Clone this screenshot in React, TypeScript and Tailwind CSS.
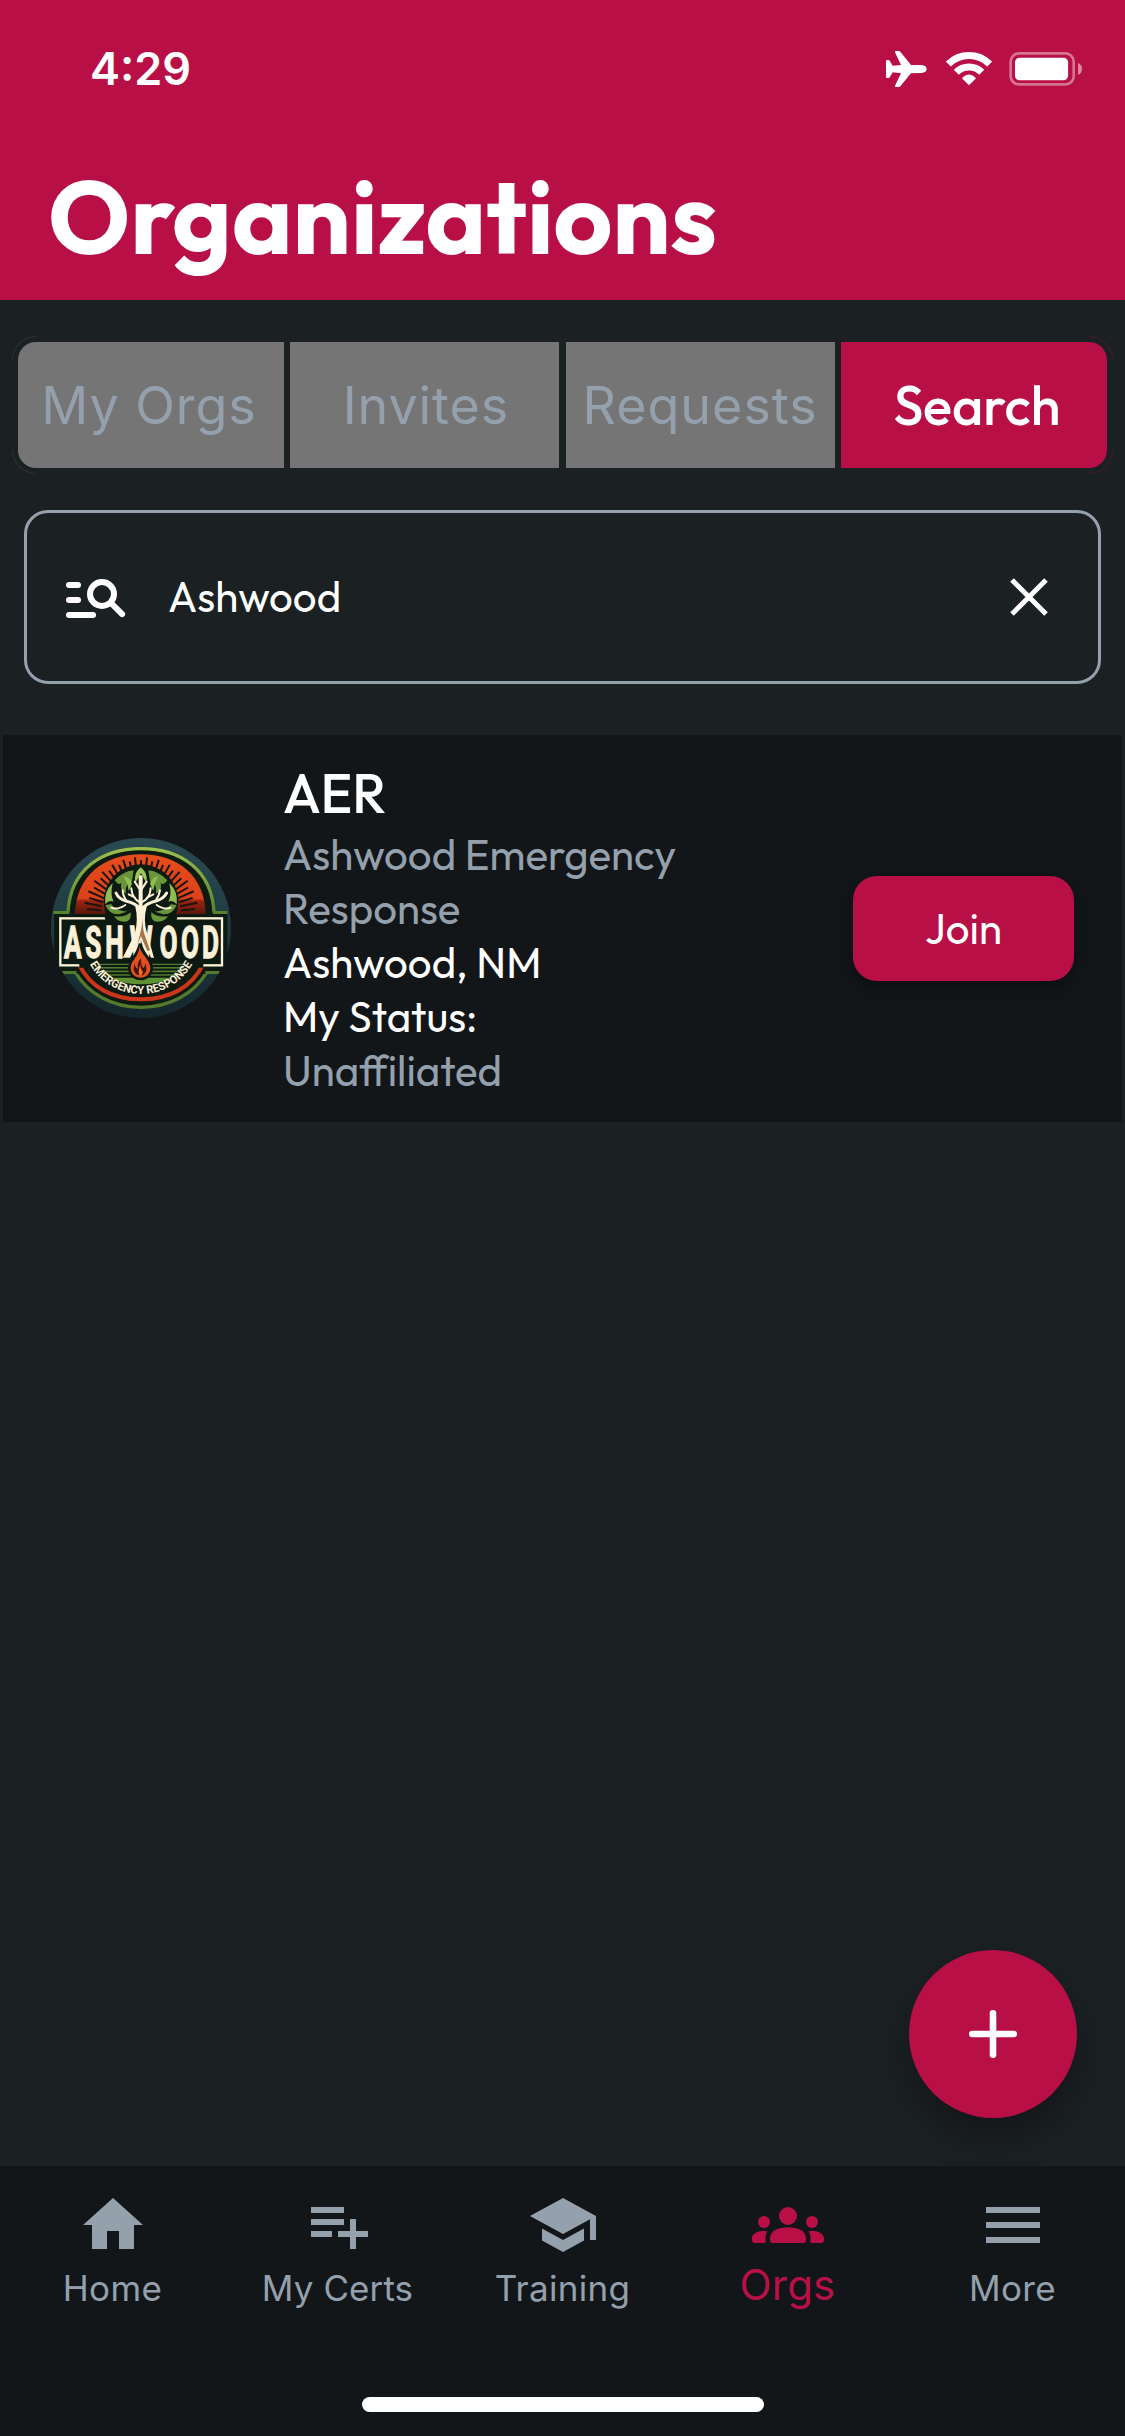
import type { ReactNode } from "react";

function StatusIcons() {
  return (
    <div className="flex items-center text-white">
      <svg viewBox="78 60 123 114" className="h-[38px] w-[41px]" fill="currentColor">
        <path d="M153 105 L121 65 Q119 63 116 63 L108 63 Q103 63 105 67 L123 105 L98 107 L89 92 Q88 90 85 90 L81 90 Q78 90 78 93 L78 141 Q78 144 81 144 L85 144 Q88 144 89 142 L98 127 L123 130 L105 167 Q103 171 108 171 L116 171 Q119 171 121 169 L153 130 L184 129 Q200 127 200 117 Q200 107 184 105 Z" />
      </svg>
      <svg viewBox="257 60 139 114" className="ml-[19px] h-[38px] w-[46px]" fill="none" stroke="currentColor" strokeWidth="21">
        <path d="M264 102 A88.5 88.5 0 0 1 389 102" />
        <path d="M288 127 A54 54 0 0 1 365 127" />
        <path d="M326.500 163 L308 145 Q326.500 127 345 145 Z" fill="currentColor" strokeWidth="4" strokeLinejoin="round" />
      </svg>
      <svg viewBox="446 60 220 114" className="ml-[17px] h-[38px] w-[73px]" fill="currentColor">
        <rect x="451" y="70" width="190" height="93.500" rx="25" fill="none" stroke="currentColor" strokeOpacity=".42" strokeWidth="8" />
        <rect x="464" y="83" width="160" height="68" rx="14" />
        <path d="M654 99 Q666 104 666 117 Q666 130 654 135 Z" fillOpacity=".5" />
      </svg>
    </div>
  );
}

function ManageSearchIcon() {
  return (
    <svg viewBox="0 0 24 24" className="size-[72px] shrink-0" fill="currentColor">
      <rect x="2" y="7" width="5" height="2" rx="1" />
      <rect x="2" y="12" width="5" height="2" rx="1" />
      <rect x="2" y="17" width="10" height="2" rx="1" />
      <circle cx="14" cy="11" r="4" fill="none" stroke="currentColor" strokeWidth="2" />
      <path d="M17 14 L20.700 17.700" fill="none" stroke="currentColor" strokeWidth="2" strokeLinecap="round" />
    </svg>
  );
}

const rays = Array.from({ length: 29 }, (_, i) => -84 + i * 6);

function AshwoodLogo() {
  return (
    <svg viewBox="33 55 540 540" className="mb-px size-[180px] shrink-0">
      <defs>
        <linearGradient id="disc" x1="0" y1="0" x2="0" y2="1">
          <stop offset="0" stopColor="#2a4a51" />
          <stop offset=".5" stopColor="#1f3b42" />
          <stop offset="1" stopColor="#13262b" />
        </linearGradient>
        <linearGradient id="sun" x1="0" y1="0" x2="0" y2="1">
          <stop offset="0" stopColor="#e64c1c" />
          <stop offset=".74" stopColor="#dc4219" />
          <stop offset=".78" stopColor="#9c2412" />
          <stop offset="1" stopColor="#5c170d" />
        </linearGradient>
        <linearGradient id="ring" x1="0" y1="0" x2="0" y2="1">
          <stop offset="0" stopColor="#9bc04c" />
          <stop offset=".45" stopColor="#4f7a2c" />
          <stop offset="1" stopColor="#56792c" />
        </linearGradient>
        <clipPath id="discClip">
          <circle cx="303" cy="325" r="270" />
        </clipPath>
        <path id="motto" d="M126 346 A177 177 0 0 0 480 346" />
      </defs>
      <circle cx="303" cy="325" r="270" fill="url(#disc)" />
      <g clipPath="url(#discClip)">
        <path
          d="M40 279 H84 C90 150 185 87 303 87 C421 87 516 150 522 279 H562 M50 458 H106 C145 522 215 563 303 563 C391 563 461 522 500 458 H556"
          fill="#0c1a12"
          stroke="url(#ring)"
          strokeWidth="10"
        />
        <rect x="42" y="283" width="520" height="171" fill="#0c1a12" />
      </g>
      <path d="M88 278 H518 V290 H88 Z M110 450 H496 V462 H110 Z" fill="#0c1a12" />
      <path d="M105 283 C108 170 190 104 303 104 C416 104 494 170 497 283 Z" fill="url(#sun)" />
      <g stroke="#1b140d" strokeWidth="6">
        {rays.map((a, i) => (
          <path key={a} d={i % 2 ? "M303 165 V112" : "M303 165 V122"} transform={`rotate(${a} 303 285)`} />
        ))}
      </g>
      <path d="M116 432 C150 505 220 539 303 539 C386 539 456 505 490 432" fill="none" stroke="#cc3519" strokeWidth="12" />
      <path d="M164 433 H442 M172 444 H434 M184 455 H422 M197 466 H410" stroke="#4d7a2b" strokeWidth="5" />
      <path d="M212 474 H396 Q352 494 303 494 Q254 494 212 474 Z" fill="#5e9131" />
      <rect x="61" y="296" width="485" height="141" fill="#0c1a12" stroke="#fdf1d8" strokeWidth="7" />
      <path d="M118 437 H490" stroke="#0c1a12" strokeWidth="14" />
      <path d="M176 434 H430 M176 444 H430" stroke="#4d7a2b" strokeWidth="4" />
      <path d="M192 286 H414 L404 320 H202 Z" fill="#0c1a12" />
      <circle cx="303" cy="246" r="112" fill="#0c1a12" />
      <g fill="#69963a">
        <path d="M302 143 Q326 162 319 190 L303 160 L286 190 Q279 162 302 143 Z" fill="#9bc65a" />
        <path d="M281 152 Q247 156 224 182 Q234 198 244 190 Q239 213 258 222 Q254 190 276 184 Z" />
        <path d="M325 152 Q359 156 382 182 Q372 198 362 190 Q367 213 348 222 Q352 190 330 184 Z" />
        <path d="M218 190 Q191 216 196 254 Q207 240 221 246 Q210 226 218 190 Z" fill="#8fbd4f" />
        <path d="M388 190 Q415 216 410 254 Q399 240 385 246 Q396 226 388 190 Z" fill="#8fbd4f" />
        <path d="M196 256 Q208 285 236 284 Q252 278 262 276 Q225 274 214 254 Z" />
        <path d="M410 256 Q398 285 370 284 Q354 278 344 276 Q381 274 392 254 Z" />
        <path d="M222 290 Q235 310 262 305 Q275 298 272 278 Q256 294 222 290 Z" />
        <path d="M384 290 Q371 310 344 305 Q331 298 334 278 Q350 294 384 290 Z" />
        <path d="M250 170 Q270 172 276 192 L266 214 Q262 186 250 170 Z M356 170 Q336 172 330 192 L340 214 Q344 186 356 170 Z" fill="#8fbd4f" />
      </g>
      <g fill="none" stroke="#fdf1d8" strokeLinecap="round">
        <path d="M302 172 V280" strokeWidth="12" />
        <path d="M301 270 Q288 250 258 244 Q236 238 228 220 M305 270 Q318 250 348 244 Q370 238 380 220" strokeWidth="9" />
        <path d="M256 256 Q232 272 214 264 M350 256 Q374 272 392 264 M260 244 Q248 228 248 212 M346 244 Q358 228 360 212" strokeWidth="6" />
        <path d="M300 248 Q276 236 274 206 M305 248 Q330 236 332 206 M300 210 L284 186 M304 210 L320 186 M285 234 L266 224 M321 234 L340 224" strokeWidth="6" />
      </g>
      <text
        fill="#fdf1d8"
        stroke="#fdf1d8"
        strokeWidth="4"
        fontFamily="Roboto, sans-serif"
        fontWeight="700"
        fontSize="135"
        transform="translate(0 414) scale(.58 1)"
        x="124 234 338 464 618 729 838"
        y="0"
      >
        ASHWOOD
      </text>
      <path d="M286 262 Q296 300 284 344 L248 414 H270 L303 350 L333 414 H342 L322 344 Q308 300 320 262 Z" fill="#fdf1d8" />
      <path d="M310 284 Q306 316 312 340 L330 392 L322 394 L303 350 L292 372 Q306 330 310 284 Z" fill="#a8734a" />
      <path
        d="M301 372 C304 402 335 418 334 446 C333 466 318 477 302 477 C285 477 269 465 269 444 C269 424 294 408 301 372 Z"
        fill="#0c1a12"
        stroke="#0c1a12"
        strokeWidth="10"
      />
      <path d="M299 380 C302 405 331 420 331 446 C331 464 317 474 302 474 C286 474 272 463 272 445 C272 424 296 412 299 380 Z" fill="#e2501f" />
      <path d="M283 430 Q286 446 294 447 Q290 430 303 416 Q302 440 311 446 Q316 438 315 430 Q326 452 310 466 Q286 470 281 450 Z" fill="#43130b" />
      <path d="M301 434 Q302 452 309 456 Q307 468 300 468 Q291 462 301 434 Z" fill="#ee6a2a" />
      <text fill="#fdf1d8" fontFamily="Roboto, sans-serif" fontWeight="700" fontSize="34">
        <textPath href="#motto" startOffset="50%" textAnchor="middle" textLength="372" lengthAdjust="spacingAndGlyphs">
          EMERGENCY RESPONSE
        </textPath>
      </text>
    </svg>
  );
}

const navIcons: Record<string, ReactNode> = {
  Home: <path d="M10 20v-6h4v6h5v-8h3L12 3 2 12h3v8z" />,
  "My Certs": <path d="M14 10H3v2h11v-2zm0-4H3v2h11V6zm4 8v-4h-2v4h-4v2h4v4h2v-4h4v-2h-4zM3 16h7v-2H3v2z" />,
  Training: <path d="M5 13.180v4L12 21l7-3.820v-4L12 17l-7-3.820zM12 3L1 9l11 6 9-4.910V17h2V9L12 3z" />,
  Orgs: (
    <>
      <circle cx="12" cy="9" r="3" />
      <circle cx="4" cy="11" r="2" />
      <circle cx="20" cy="11" r="2" />
      <path d="M6 17v-.600c0-2.400 2.700-3.650 6-3.650s6 1.250 6 3.650v.600a1 1 0 0 1-1 1H7a1 1 0 0 1-1-1z" />
      <path d="M5.100 14.100A6.900 6.900 0 0 0 4 14c-2.200 0-4 .900-4 2.430V17a1 1 0 0 0 1 1h3.500v-1.610c0-.830.230-1.610.600-2.290zM18.900 14.100c.370-.100.730-.100 1.100-.100 2.200 0 4 .900 4 2.430V17a1 1 0 0 1-1 1h-3.500v-1.610c0-.830-.230-1.610-.600-2.290z" />
    </>
  ),
  More: <path d="M3 18h18v-2H3v2zm0-5h18v-2H3v2zm0-7v2h18V6H3z" />,
};

const navItems = [
  { label: "Home", tracking: "tracking-[0.4px]" },
  { label: "My Certs", tracking: "tracking-[0.1px]" },
  { label: "Training", tracking: "tracking-[0.3px]" },
  { label: "Orgs", tracking: "tracking-[0.2px]", active: true },
  { label: "More", tracking: "tracking-[0.3px]" },
];

export default function App() {
  return (
    <div className="relative flex h-[2436px] w-[1125px] flex-col overflow-hidden bg-[#1b2023] font-['Outfit','Lato',sans-serif] text-white">
      <header className="h-[300px] bg-[#b81046]">
        <div className="flex h-[138px] items-center justify-between pr-[43px] pl-[90px]">
          <span className="font-['Inter',sans-serif] text-[45px] leading-[54px] font-semibold">4:29</span>
          <StatusIcons />
        </div>
        <h1 className="mt-[19px] ml-12 text-[102px] leading-[120px] font-bold">Organizations</h1>
      </header>

      <div className="relative mx-[18px] mt-[42px] flex h-[126px] justify-between font-['Inter',sans-serif] text-[52px] leading-[64px] text-[#94a1ad]">
        <div className="flex w-[266px] items-center justify-center rounded-l-[18px] bg-[#757575] pt-0.5 pr-1 tracking-[0.93px]">My Orgs</div>
        <div className="flex w-[269px] items-center justify-center bg-[#757575] pt-0.5 pl-0.5 tracking-[0.9px]">Invites</div>
        <div className="flex w-[269px] items-center justify-center bg-[#757575] pt-0.5 tracking-[1px]">Requests</div>
        <div className="flex w-[266px] items-center justify-center rounded-r-[18px] bg-[#b81046] pl-1.5 font-['Outfit','Lato',sans-serif] text-[54px] font-medium text-white">
          Search
        </div>
        <span className="absolute -top-1.5 -left-1.5 size-6 rounded-tl-[24px] border-t border-l border-[#757575]/20" />
        <span className="absolute -bottom-1.5 -left-1.5 size-6 rounded-bl-[24px] border-b border-l border-[#757575]/20" />
        <span className="absolute -top-1.5 -right-1.5 size-6 rounded-tr-[24px] border-t border-r border-[#b81046]/25" />
        <span className="absolute -right-1.5 -bottom-1.5 size-6 rounded-br-[24px] border-r border-b border-[#b81046]/25" />
      </div>

      <div className="mx-6 mt-[42px] flex h-[174px] items-center rounded-[24px] border-3 border-[#94a1ad] pr-[50px] pl-[33px]">
        <ManageSearchIcon />
        <span className="ml-9 flex-1 text-[42px] leading-[54px]">Ashwood</span>
        <svg viewBox="0 0 38 38" className="size-[38px]" stroke="currentColor" strokeWidth="5">
          <path d="M2 2 L36 36 M36 2 L2 36" />
        </svg>
      </div>

      <div className="mx-[3px] mt-[51px] flex h-[387px] items-center bg-[#121619] px-12">
        <AshwoodLogo />
        <div className="ml-[52px] flex-1 text-[42px] leading-[54px] whitespace-nowrap">
          <div className="mb-0.5 text-[54px] leading-[66px] font-medium">AER</div>
          <div className="text-[#94a1ad]">Ashwood Emergency</div>
          <div className="text-[#94a1ad]">Response</div>
          <div>Ashwood, NM</div>
          <div>My Status:</div>
          <div className="text-[#94a1ad]">Unaffiliated</div>
        </div>
        <button className="h-[105px] w-[221px] rounded-[24px] bg-[#b81046] text-[42px] leading-[54px] shadow-[0_6px_15px_rgba(0,0,0,0.35)]">
          Join
        </button>
      </div>

      <button className="absolute top-[1950px] left-[909px] flex size-[168px] items-center justify-center rounded-full bg-[#b81046] shadow-[0_18px_36px_rgba(0,0,0,0.3)]">
        <svg viewBox="0 0 48 48" className="size-12" stroke="currentColor" strokeWidth="6.600" strokeLinecap="round">
          <path d="M24 3.300 V44.700 M3.300 24 H44.700" />
        </svg>
      </button>

      <nav className="relative mt-auto flex h-[270px] flex-col items-center bg-[#121619] font-['Inter',sans-serif]">
        <div className="grid w-full grid-cols-5 pt-[23px]">
          {navItems.map(({ label, tracking, active }) => (
            <div key={label} className={`flex flex-col items-center ${active ? "text-[#b81046]" : "text-[#94a1ad]"}`}>
              <svg viewBox="0 0 24 24" className="size-[72px]" fill="currentColor">
                {navIcons[label]}
              </svg>
              <span className={`leading-[42px] ${tracking} ${active ? "mt-[3px] text-[42px]" : "mt-1.5 text-[35px]"}`}>{label}</span>
            </div>
          ))}
        </div>
        <div className="mt-auto mb-6 h-[15px] w-[402px] rounded-full bg-white" />
      </nav>
    </div>
  );
}
